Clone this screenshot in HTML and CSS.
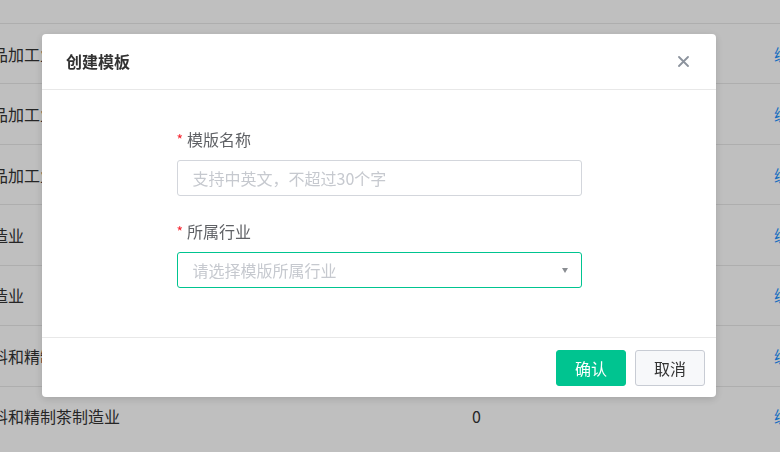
FILE: index.html
```html
<!DOCTYPE html>
<html lang="zh-CN">
  <head>
    <meta charset="UTF-8" />
    <meta name="viewport" content="width=device-width, initial-scale=1.0" />
    <title>模板管理</title>
    <link rel="stylesheet" href="styles.css">
  </head>
  <body>
    <div class="table">
      <div class="row">
        <span class="name">食品加工业</span>
        <span class="count">2</span>
        <span class="op">编辑</span>
      </div>
      <div class="row">
        <span class="name">食品加工业</span>
        <span class="count">1</span>
        <span class="op">编辑</span>
      </div>
      <div class="row">
        <span class="name">食品加工业</span>
        <span class="count">0</span>
        <span class="op">编辑</span>
      </div>
      <div class="row">
        <span class="name">制造业</span>
        <span class="count">3</span>
        <span class="op">编辑</span>
      </div>
      <div class="row">
        <span class="name">制造业</span>
        <span class="count">1</span>
        <span class="op">编辑</span>
      </div>
      <div class="row">
        <span class="name">饮料和精制茶制造业</span>
        <span class="count">0</span>
        <span class="op">编辑</span>
      </div>
      <div class="row">
        <span class="name">饮料和精制茶制造业</span>
        <span class="count">0</span>
        <span class="op">编辑</span>
      </div>
    </div>

    <div class="mask"></div>

    <div class="modal">
      <div class="modal-header">
        <span class="modal-title">创建模板</span>
        <svg class="close" width="11" height="11" viewBox="0 0 11 11">
          <path d="M1 1L10 10M10 1L1 10" stroke="#8c939d" stroke-width="1.8" stroke-linecap="round" />
        </svg>
      </div>

      <div class="modal-body">
        <form class="form">
          <label class="label"><span class="req">*</span>模版名称</label>
          <input class="input" type="text" placeholder="支持中英文，不超过30个字" />

          <label class="label"><span class="req">*</span>所属行业</label>
          <div class="select">
            <span class="placeholder">请选择模版所属行业</span>
            <span class="arrow"></span>
          </div>
        </form>
      </div>

      <div class="modal-footer">
        <button class="btn btn-primary" type="button">确认</button>
        <button class="btn" type="button">取消</button>
      </div>
    </div>
  </body>
</html>
```

FILE: styles.css
```css
* {
  box-sizing: border-box;
}

body {
  margin: 0;
  font-family: "Noto Sans CJK SC", "Microsoft YaHei", sans-serif;
  font-size: 16px;
  color: #333;
  background-color: #ffffff;
  overflow: hidden;
}

.table {
  padding-top: 23px;
}

.row {
  display: flex;
  align-items: center;
  height: 60.45px;
  border-top: 1px solid #e8e8e8;
  white-space: nowrap;
}

.name {
  flex: 0 0 496px;
  margin-left: -24px;
  text-align: left;
}

.count {
  flex: 1;
}

.op {
  flex: 0 0 6px;
  min-width: 0;
  color: #1890ff;
}

.mask {
  position: fixed;
  top: 0;
  left: 0;
  right: 0;
  bottom: 0;
  background-color: rgba(0, 0, 0, 0.25);
}

.modal {
  position: fixed;
  top: 34px;
  left: 42px;
  width: 674px;
  background-color: #ffffff;
  border-radius: 4px;
  box-shadow: 0 2px 8px rgba(0, 0, 0, 0.15);
}

.modal-header {
  display: flex;
  align-items: center;
  justify-content: space-between;
  height: 56px;
  padding: 0 27px 1px 24px;
  border-bottom: 1px solid #e8e8e8;
}

.modal-title {
  font-size: 16px;
  font-weight: 600;
  color: #333;
}

.close {
  display: block;
}

.modal-body {
  height: 247px;
  padding-top: 37px;
}

.form {
  width: 405px;
  margin: 0 auto;
}

.label {
  display: block;
  height: 24px;
  line-height: 24px;
  margin-bottom: 9px;
  color: #606266;
}

.req {
  color: #f5222d;
  font-size: 14px;
  margin-right: 4px;
  vertical-align: top;
}

.input,
.select {
  display: flex;
  align-items: center;
  width: 100%;
  height: 36px;
  padding: 0 15px;
  border: 1px solid #d3d6dc;
  border-radius: 3px;
  font-family: inherit;
  font-size: 16px;
  color: #333;
  outline: none;
}

.input {
  margin-bottom: 23px;
}

.input::placeholder,
.placeholder {
  color: #c6c9cf;
}

.select {
  justify-content: space-between;
  border-color: #00c490;
}

.arrow {
  width: 0;
  height: 0;
  margin-right: -2px;
  border-left: 3.5px solid transparent;
  border-right: 3.5px solid transparent;
  border-top: 5px solid #8a8d92;
}

.modal-footer {
  display: flex;
  justify-content: flex-end;
  gap: 9px;
  padding: 12px 11px 11px;
  border-top: 1px solid #e8e8e8;
}

.btn {
  width: 70px;
  height: 36px;
  border: 1px solid #c8ccd4;
  border-radius: 3px;
  background-color: #f7f8fa;
  font-family: inherit;
  font-size: 16px;
  color: #333;
  cursor: pointer;
}

.btn-primary {
  background-color: #00c490;
  border-color: #00c490;
  color: #ffffff;
}
```
